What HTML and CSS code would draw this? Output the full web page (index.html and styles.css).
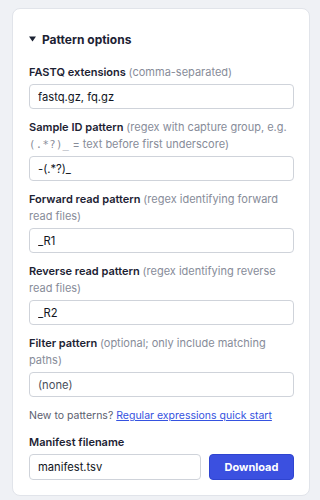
FILE: index.html
```html
<!DOCTYPE html>
<html lang="en">
<head>
<meta charset="utf-8">
<title>Pattern options</title>
<link rel="stylesheet" href="styles.css">
</head>
<body>
<div class="card">
  <div class="heading">
    <svg class="caret" width="7" height="6" viewBox="0 0 7 6"><path d="M0 0.5 L7 0.5 L3.5 5.5 Z" fill="#1c2233"/></svg>
    <span>Pattern options</span>
  </div>

  <div class="field">
    <label class="label">FASTQ extensions <span class="hint">(comma-separated)</span></label>
    <input class="input" type="text" value="fastq.gz, fq.gz">
  </div>

  <div class="field">
    <label class="label">Sample ID pattern <span class="hint">(regex with capture group, e.g. <code class="code">(.*?)_</code> = text before first underscore)</span></label>
    <input class="input" type="text" value="-(.*?)_">
  </div>

  <div class="field">
    <label class="label">Forward read pattern <span class="hint">(regex identifying forward read files)</span></label>
    <input class="input" type="text" value="_R1">
  </div>

  <div class="field">
    <label class="label">Reverse read pattern <span class="hint">(regex identifying reverse read files)</span></label>
    <input class="input" type="text" value="_R2">
  </div>

  <div class="field">
    <label class="label">Filter pattern <span class="hint">(optional; only include matching paths)</span></label>
    <input class="input" type="text" placeholder="(none)">
  </div>

  <p class="help">New to patterns? <a class="link" href="#">Regular expressions quick start</a></p>

  <div class="field last">
    <label class="label">Manifest filename</label>
    <div class="row">
      <input class="input grow" type="text" value="manifest.tsv">
      <button class="btn" type="button">Download</button>
    </div>
  </div>
</div>
</body>
</html>
```

FILE: styles.css
```css
html, body {
  margin: 0;
  padding: 0;
  background: #eff1f5;
}
body {
  padding: 8px 10px 8px 12px;
  font-family: Inter, "Noto Sans", sans-serif;
  color: #1c2233;
}
.card {
  background: #ffffff;
  border: 1px solid #e1e4ea;
  border-radius: 8px;
  padding: 16px 15px 15px 16px;
}
.heading {
  display: flex;
  align-items: center;
  gap: 6px;
  height: 28px;
  font-size: 12px;
  font-weight: 700;
  margin-bottom: 11px;
}
.caret {
  display: block;
}
.field {
  display: flex;
  flex-direction: column;
  margin-bottom: 10px;
}
.field.last {
  margin-bottom: 0;
}
.label {
  font-size: 11px;
  line-height: 17px;
  font-weight: 600;
  margin-bottom: 3px;
}
.hint {
  font-weight: 400;
  color: #878c99;
}
.code {
  font-family: "DejaVu Sans Mono", monospace;
  font-size: 10.5px;
  letter-spacing: 0.4px;
}
.input {
  box-sizing: border-box;
  height: 25px;
  border: 1px solid #cfd3da;
  border-radius: 4px;
  padding: 0 8px;
  font-family: Inter, "Noto Sans", sans-serif;
  font-size: 11.2px;
  color: #111522;
  background: #fff;
  width: 100%;
}
.input::placeholder {
  color: #4a4f5c;
}
.help {
  margin: 0 0 10px;
  font-size: 10.5px;
  line-height: 17px;
  color: #5b6070;
}
.link {
  color: #3552e0;
  text-decoration: underline;
}
.row {
  display: flex;
  gap: 8px;
}
.grow {
  flex: 1;
  height: 26px;
}
.btn {
  width: 85px;
  height: 26px;
  background: #3b50e0;
  border: 1px solid #2f44d0;
  border-radius: 4px;
  color: #ffffff;
  font-family: Inter, "Noto Sans", sans-serif;
  font-size: 11px;
  font-weight: 700;
}
```
